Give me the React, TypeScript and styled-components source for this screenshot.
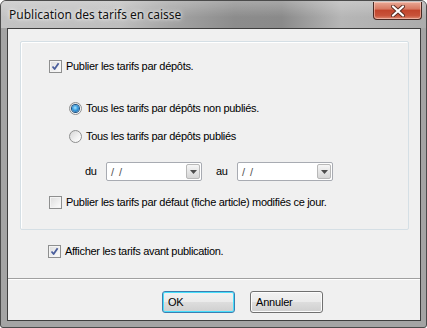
import styled, { createGlobalStyle } from 'styled-components';

const GlobalStyle = createGlobalStyle`
  html, body { margin: 0; padding: 0; background: #ffffff; }
  body { font-family: "Liberation Sans", Arial, sans-serif; }
  * { box-sizing: border-box; }
`;

const Window = styled.div`
  width: 427px;
  height: 328px;
  display: flex;
  flex-direction: column;
  background: #a4a4a4;
  border: 1px solid #4b4b4b;
  border-radius: 6px 6px 3px 3px;
  overflow: hidden;
`;

const TitleBar = styled.div`
  height: 27px;
  display: flex;
  align-items: flex-start;
  justify-content: space-between;
  padding-left: 8px;
  background:
    linear-gradient(180deg, rgba(255, 255, 255, 0.25) 0%, rgba(255, 255, 255, 0) 60%),
    linear-gradient(90deg, #c3c3c3 0%, #bebebe 28%, #a4a4a4 40%, #8c8c8c 55%, #8a8a8a 66%, #b6b6b6 80%, #acacac 100%);
`;

const Title = styled.span`
  margin-top: 6px;
  font-family: "Noto Sans", "Open Sans", sans-serif;
  font-size: 12px;
  line-height: 16px;
  color: #111;
  text-shadow: 0 0 6px rgba(255, 255, 255, 0.9), 0 0 3px rgba(255, 255, 255, 0.9);
`;

const CloseButton = styled.div`
  width: 49px;
  height: 18px;
  margin-top: 1px;
  margin-right: 4px;
  display: flex;
  align-items: center;
  justify-content: center;
  border: 1px solid #4a2a24;
  border-top: none;
  border-radius: 0 0 4px 4px;
  background: linear-gradient(180deg, #e9a895 0%, #d87a63 40%, #c2452c 50%, #c8533a 80%, #de8a72 100%);
  box-shadow: inset 0 0 0 1px rgba(255, 220, 210, 0.5);
`;

const Frame = styled.div`
  flex: 1;
  display: flex;
  padding: 0 5px 6px 6px;
`;

const Client = styled.div`
  flex: 1;
  display: flex;
  flex-direction: column;
  background: #f0f0f0;
  border: 1px solid #3e3e3e;
  padding-top: 12px;
`;

const Panel = styled.div`
  margin-left: 12px;
  width: 389px;
  height: 189px;
  display: flex;
  flex-direction: column;
  border: 1px solid #d5dfe5;
  box-shadow: inset 1px 1px 0 #ffffff;
  border-radius: 2px;
`;

const Row = styled.div<{ $top: number; $indent: number }>`
  display: flex;
  align-items: center;
  margin-top: ${(p) => p.$top}px;
  padding-left: ${(p) => p.$indent}px;
`;

const Label = styled.span`
  font-size: 11px;
  letter-spacing: -0.3px;
  line-height: 13px;
  color: #000;
  white-space: nowrap;
`;

const Box = styled.span`
  width: 13px;
  height: 13px;
  flex: none;
  display: flex;
  align-items: center;
  justify-content: center;
  margin-right: 4px;
  border: 1px solid #8e8f8f;
  background: linear-gradient(135deg, #dcdcdc 0%, #f0f0f0 60%, #fdfdfd 100%);
  box-shadow: inset 0 0 0 1px #f4f4f4;
`;

const Radio = styled.span<{ $checked?: boolean }>`
  width: 13px;
  height: 13px;
  flex: none;
  display: flex;
  align-items: center;
  justify-content: center;
  margin-right: 4px;
  border-radius: 50%;
  border: 1px solid #8e8f8f;
  background: linear-gradient(135deg, #d6d6d6 0%, #f2f2f2 60%, #ffffff 100%);

  &::after {
    content: '';
    display: ${(p) => (p.$checked ? 'block' : 'none')};
    width: 7px;
    height: 7px;
    border-radius: 50%;
    background: radial-gradient(circle at 45% 40%, #a9e4ff 0%, #3a9ee0 45%, #10508f 100%);
    box-shadow: 0 0 0 1px #1c4f7f;
  }
`;

const DateLabel = styled(Label)`
  width: 21px;
`;

const Combo = styled.div`
  width: 96px;
  height: 19px;
  display: flex;
  align-items: center;
  justify-content: space-between;
  padding: 0 1px 0 4px;
  background: #ffffff;
  border: 1px solid #a8abb2;
  border-radius: 2px;
`;

const ComboText = styled.span`
  font-size: 11px;
  color: #555;
  letter-spacing: 1px;
`;

const ComboButton = styled.span`
  width: 14px;
  height: 15px;
  display: flex;
  align-items: center;
  justify-content: center;
  border: 1px solid #b8b8b8;
  border-radius: 2px;
  background: linear-gradient(180deg, #f6f6f6 0%, #e6e6e6 50%, #d6d6d6 100%);
`;

const ComboGap = styled.span`
  width: 14px;
`;

const Section = styled.div`
  height: 48px;
  padding-top: 15px;
  padding-left: 40px;
  display: flex;
  align-items: flex-start;
`;

const Rule = styled.div`
  height: 2px;
  border-top: 1px solid #a0a0a0;
  border-bottom: 1px solid #ffffff;
`;

const Footer = styled.div`
  display: flex;
  gap: 15px;
  padding: 11px 0 0 154px;
`;

const Button = styled.div<{ $focused?: boolean }>`
  width: 73px;
  height: 22px;
  display: flex;
  align-items: center;
  padding-left: 5px;
  font-size: 11px;
  letter-spacing: -0.2px;
  color: #000;
  border: 1px solid ${(p) => (p.$focused ? '#3c7fb1' : '#707070')};
  border-radius: 3px;
  background: linear-gradient(180deg, #f2f2f2 0%, #ebebeb 48%, #dddddd 52%, #cfcfcf 100%);
  box-shadow: inset 0 0 0 1px ${(p) => (p.$focused ? '#48dffc' : '#fcfcfc')};
`;

const Check = () => (
  <svg width="9" height="9" viewBox="0 0 9 9">
    <path d="M1.5 4.5 L3.6 7 L7.6 1.2" fill="none" stroke="#4a5e9c" strokeWidth="1.8" strokeLinejoin="round" />
  </svg>
);

const Arrow = () => (
  <svg width="7" height="4" viewBox="0 0 7 4">
    <path d="M0 0 H7 L3.5 4 Z" fill="#4d4d4d" />
  </svg>
);

const CloseIcon = () => (
  <svg width="14" height="12" viewBox="0 0 14 12">
    <path d="M2 1.5 L12 10.5 M12 1.5 L2 10.5" stroke="#5a2c22" strokeWidth="4" strokeLinecap="round" />
    <path d="M2 1.5 L12 10.5 M12 1.5 L2 10.5" stroke="#ffffff" strokeWidth="2.2" strokeLinecap="round" />
  </svg>
);

const DateCombo = () => (
  <Combo>
    <ComboText>/ /</ComboText>
    <ComboButton>
      <Arrow />
    </ComboButton>
  </Combo>
);

export default function App() {
  return (
    <>
      <GlobalStyle />
      <Window>
        <TitleBar>
          <Title>Publication des tarifs en caisse</Title>
          <CloseButton>
            <CloseIcon />
          </CloseButton>
        </TitleBar>
        <Frame>
          <Client>
            <Panel>
              <Row $top={18} $indent={28}>
                <Box>
                  <Check />
                </Box>
                <Label>Publier les tarifs par dépôts.</Label>
              </Row>
              <Row $top={29} $indent={48}>
                <Radio $checked />
                <Label>Tous les tarifs par dépôts non publiés.</Label>
              </Row>
              <Row $top={15} $indent={48}>
                <Radio />
                <Label>Tous les tarifs par dépôts publiés</Label>
              </Row>
              <Row $top={19} $indent={64}>
                <DateLabel>du</DateLabel>
                <DateCombo />
                <ComboGap />
                <DateLabel>au</DateLabel>
                <DateCombo />
              </Row>
              <Row $top={15} $indent={28}>
                <Box />
                <Label>Publier les tarifs par défaut (fiche article) modifiés ce jour.</Label>
              </Row>
            </Panel>
            <Section>
              <Box>
                <Check />
              </Box>
              <Label>Afficher les tarifs avant publication.</Label>
            </Section>
            <Rule />
            <Footer>
              <Button $focused>OK</Button>
              <Button>Annuler</Button>
            </Footer>
          </Client>
        </Frame>
      </Window>
    </>
  );
}
